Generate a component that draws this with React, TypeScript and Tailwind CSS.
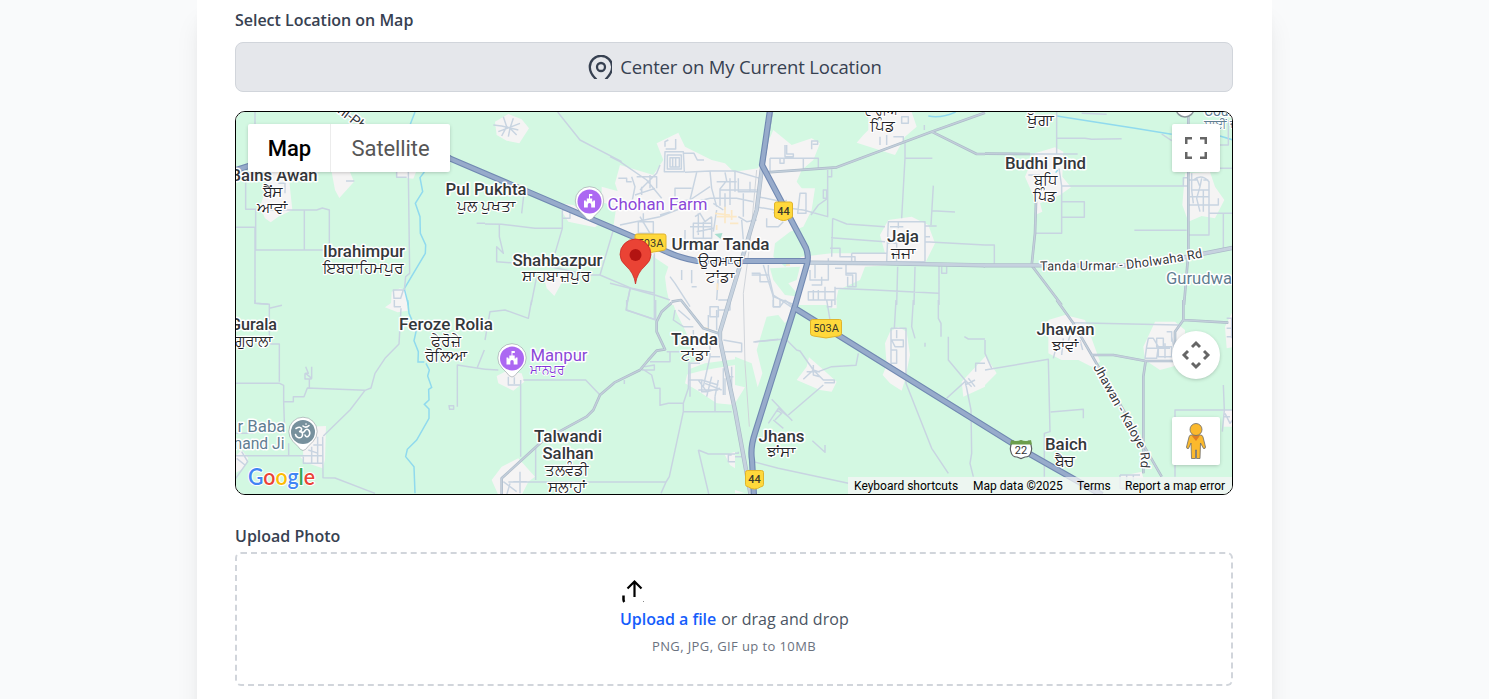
import React from 'react';

type Tile = {
  x: number;
  y: number;
  urban?: string;
  park?: string;
  minor?: string;
  sand?: string;
  secondary?: string;
  wide?: string;
  rail?: string;
  water?: string;
};

// Each tile is drawn on a 3x grid, placed at its own origin on the map canvas.
const tiles: Tile[] = [
  {
    x: 235, y: 110,
    urban: 'M90 186L160 186 172 300 130 320 107 337 90 325 75 290 95 230ZM290 186L345 186 357 215 313 264 300 240ZM485 186h58l-8 20-50-5zM470 545l25-10 18 5 5 45h-50z',
    minor: 'M60 0V120M32 186V298H62V420M3 352H62M60 350V580l40 3M62 420H283V300L262 294 245 300 62 299M208 300V420M520 186L524 490 512 500 508 540M333 213h25M485 186v16h30M725 340h25M475 540h30l-8 25h-20zM130 220h20v30',
    water: 'M540 6L525 45M568 186L555 203 563 245 541 280 555 320 556 370 572 405 571 430 508 536 520 585',
  },
  {
    x: 485, y: 110,
    urban: 'M30 35L70 12 110 28 132 55 103 100 65 92 35 75ZM515 100L580 68 600 110 680 150 720 160 750 190V585H555L545 540 540 500 550 470 505 440 450 385 385 350 400 250 390 220 405 165 505 195 535 150ZM215 280L265 285 345 340 330 352 250 335ZM175 495L230 490 240 500 208 558 185 535ZM350 230l55 15-5 50-50-20z',
    park: 'M505 440L540 480 530 520 505 500Z',
    minor: 'M25 45L50 48 100 60M55 20L65 50 50 78M85 25L75 55 95 75M40 65L105 40M65 50L75 55 70 80M218 6L285 90 410 155M118 240L110 310M0 342L50 343 150 355H232V300M43 342V380L55 430 35 410V455L95 460M232 300H255V325H232M232 355L210 430M385 360L345 495 440 535 510 550M345 495H310L150 460M155 500L138 585M508 430V550M436 535L425 585',
  },
  {
    x: 735, y: 110,
    urban: 'M0 185L70 175 75 150 115 60 170 105 230 85 255 100 235 150 200 180 185 215 200 235 240 235 230 300 205 350 165 365 120 400 115 440 150 470 200 440 290 430H450L435 375 460 330 530 320 580 345 600 400 570 460 470 465 390 470 375 510 310 540 300 585H0ZM385 75L400 60V6H530L545 50 510 80 480 135 365 98Z',
    park: 'M105 475L195 470 185 510 160 520 195 560 150 555 115 510Z',
    minor: 'M105 145V185M105 145H250V178M135 145v15h12v-15M205 145v35M150 105v35h25v-8h-20v-27M230 118v-25h18v10h-15M510 95V145h82M510 145L500 325M595 227L588 345M592 302l68 4M290 178v22h-10M278 180V320L205 300M278 265L250 285 228 315M195 250h18v60h-25zM265 240h10v25h-10zM293 325L290 440M293 325L335 342 450 350M288 383L450 395M570 395L750 405M460 335H570V455H455ZM490 335v20M505 350h-40M455 400h30v55M570 348h35M570 380h15M285 415h30v25h45v20M280 445V510H225V480M240 465v40M333 465v30h20v35h-15v-30M333 490h30v40h-25M350 430v28M350 430h105M230 525h30v-25M300 535L420 540 610 550M612 465V585M488 470L485 585M540 470L537 585M620 470v20h15v-20M220 545h80v25h-80zM235 540v30M250 540v30M270 530v40M300 530v55M300 475h22M50 490h25v25h30M85 465L115 560 180 585M68 260l75 15M60 290l60 10M165 295L205 300M95 325v25h35l15-15M115 310l40-40M435 80v25M455 75v30M475 80h30v20M500 20h20v20h-20z M568 45v15',
    secondary: 'M95 187L305 172 590 65 750 8M590 65L725 132H750',
    wide: 'M220 458L450 460 750 466',
    water: 'M580 18Q620 25 662 6',
  },
  {
    x: 985, y: 110,
    urban: 'M150 130L210 112 235 125 232 200 258 232 225 255 165 280 172 305 150 315 155 280 120 200ZM600 190L675 186 690 230 718 270 690 325 650 318 610 335 592 285Z',
    minor: 'M215 0V130M135 132h143M215 85L300 85 320 88 410 86M230 228H608M222 175L230 228V370H150M230 275h68v47h-68M448 361H605M0 405h28v60M612 375h60V260M672 310h80M715 310V415M700 105h30V30M705 175h45M620 190v50h50M625 210Q650 190 672 215V260M610 285h90v-20M635 205l10 25-10 35 10 40M650 205l-5 25M615 260h55M655 240v65M595 228v-25h15M610 210h25M130 195h35M155 210v25M150 200h50M290 10l75 3M530 72l30 20M670 210h-15M620 240L625 280',
    secondary: 'M0 131L135 132M140 466L230 585M153 275L150 370 140 466M610 20V430L597 585',
    wide: 'M-4 466H150L430 466 610 440 750 412',
    water: 'M215 18L450 55 560 73M705 78L745 90M212 188l6-8',
  },
  {
    x: 235, y: 300,
    urban: 'M450 22l28-20h35l5 30-30 5zM203 400L225 380 273 378 270 480 263 505 205 485ZM0 470l20-20 20 25-15 30-25 15zM195 470h60v20h-40z',
    minor: 'M60 0v10l43 3V105l5 27h25V245M3 250H134L146 256V305H175V290H207L217 264 390 271 408 264 420 220 450 175 492 132 498 25M212 200l8 20h-8l18 15V200M210 220v17h20M223 235v28M390 271L345 330 265 408M103 25l38-9M146 305L149 395M3 400H55M161 430V465M3 467H263M263 410L264 533 300 534 420 580M667 320V195L750 208M642 317h14v11h-12zM748 150l-22 55M0 538L38 485 20 455M5 475l25 20M205 470v20h60M230 440v50M248 410v80M220 450l30 10M235 435h30M478 0v20h20',
    water: 'M518 0L522 40 535 70 543 95 537 122 550 155 549 186H568M573 190L583 210 578 228 590 262 581 268 582 300 568 313 582 327V355L545 420 517 448 512 470 537 500 540 580',
  },
  {
    x: 485, y: 300,
    urban: 'M560 0H750V315L695 310 635 270 600 250 615 190 640 180 600 90 575 40ZM35 228L60 215 110 220 118 245 85 272 40 250ZM20 540L50 500 100 475 150 530 130 545 110 585H40ZM720 465l30-10v50l-15-10z',
    park: 'M600 212L660 190 750 178V195L690 205 650 212 600 225Z',
    minor: 'M0 120L15 35 60 30 130 55 140 0M425 0V30L512 60V0M0 208L40 210M115 240H302L345 285M107 240V470M152 440V540M70 546H543L553 530 595 335H740M595 335V310H550L525 316V265H510L500 225 470 205M470 210h38v-15l-30 5M495 185h60v-30M612 185L610 265 595 310M418 240v12M528 580L543 546M640 450L672 585M640 450L670 462H750M610 240h40l50 15M650 240v35h20M680 230L665 290M700 240L690 290M660 250l50 20M640 270h60M720 235v50M690 290v45M640 240l25 35 40-10M545 155h45M740 465h-10v20h20M70 230v25h35M88 232v20M55 545L95 575M105 515v65M75 550L65 585M85 545h40',
    secondary: 'M560 8L530 35 515 65V95L540 148 515 152 490 180 465 210 388 248 345 285 325 330 305 350 235 388 170 425 50 535V585',
  },
  {
    x: 735, y: 300,
    urban: 'M0 0H205L175 35 150 70 130 45 95 50 65 150 82 220 68 262 50 190 0 170ZM185 240L215 200 222 172 260 205 305 245 290 275 255 270ZM450 130L465 95 490 80 515 95 525 165 510 240 500 272 465 250 443 225 455 195ZM685 290L680 245 750 170V260ZM0 255L30 262 0 310zM0 570l30 10h-30zM270 0h35v25h-25z',
    minor: 'M55 126L140 118 155 120 185 150 195 153 235 210 250 215 290 200 363 196 370 160M205 238L235 210 265 240H298v8h-30M215 215h40M235 195v30l20 5M265 255L160 345M110 298L172 362M100 370l30-45 30 25M115 360l30 25M125 330l15 10-20 20M55 485L130 505 340 550M232 422l38 35v-22M483 0L478 85M468 85H513V250L590 445 640 520M468 85V210M470 150h15v40h-15M470 120h35v20h-25z M485 90v25M535 0L530 80 540 115M610 0V55l8 15v40M640 110V180L690 240 708 330 710 460 705 490 715 530M690 245L635 295M688 110L700 117H750M750 190H722V215M690 255l30-15M700 235l20 25M690 240l20 20M570 128v12M275 0L285 60M115 0v20h20l15-20M150 0l30 25M290 0v20h-15M0 460h10v-5M0 470h20',
  },
  {
    x: 985, y: 300,
    urban: 'M190 60L240 45 300 60 345 185 320 200 280 180 230 180 190 160ZM475 140L510 65 570 65 600 90V190L525 210 480 180ZM720 80L750 20V140L725 145ZM0 165L35 220 0 255ZM400 530l70-15 5 20zM715 330h35v50h-35z',
    minor: 'M265 68L580 75M0 210L190 178 195 395 178 400V530M197 336L295 328V355M570 530V330H750M715 255L718 330 712 395M0 120V160L20 205M490 115h15l15 25-5 35h-35l5-35zM515 115h20v25h-20zM520 140h40v30h-40zM545 95h15v30M485 145h70M540 130v45M560 110l10 50M725 55h25M725 85h25M740 55v60M725 110h25M235 115l-5 50M260 90l-15 50M285 120l8 30M210 155l-5 20M405 525v40h70M405 525h60M425 525v30M445 525v20M720 340l15 30 15-20M715 350h20',
    secondary: 'M215 0L265 70 320 165 385 165 482 183H580M482 183L475 230V520M595 0V60L570 95V180M595 60L730 68M320 165L530 530',
  },
  {
    x: 610, y: 110,
    minor: 'M0 140L30 155 110 210 155 265M25 205h25v10h15M65 200l10 30-10 50M90 240l50-50 10-25M75 255l60-20M95 230v25M80 200h60v35M120 195v40M165 110v-15l10-5M197 87v30h-30M165 125h55l3 60h-60zM172 135h42v42h-42zM180 143h28v28h-28zM188 143v28M197 143v28M222 130h30l10 20h20M225 187L300 183H375L450 205M260 187L240 270 200 275M245 235h-50v30M240 270L300 230M300 183L305 235 320 290M320 215h60M345 187l5 25-20 25v50M375 185v60M330 240h110M360 205v80M385 205v40h60M400 250v45M300 265h80l50 10M310 280l30 20M345 250v50M420 215v30M150 315L200 300 240 280 300 265M30 345L150 320 200 300M85 335h45v35h-45zM100 310v30M90 320l30 50M255 320l15-10 15 25 20-15M250 340h55v45h-55zM265 310v65M280 335v50M240 350h65M260 365l50-10M305 320v60M320 300l-10 65M385 320L410 335 440 330M400 275v45M225 360v30M0 520L60 535 133 555M60 535L48 600 135 628M133 435V628M135 555L180 570M180 500L195 520 240 590M215 480v30M245 480v40M245 530h15M325 500L320 570M325 570h35v30h-35M300 590h25v30h-25zM295 615v45M320 600v60M205 600L240 630M195 600L190 630 220 650H250M250 660v30M395 330L400 390 440 410M425 495h50v-30M475 490L490 555 550 595M490 555v35h20v-20M340 690l55 10v25h-50M300 690v50h30M310 705h20M270 760h-30v100M300 740L280 830M340 775v80M365 770v60M350 800h20M435 695L505 688',
    sand: 'M320 320h60M345 290v50M315 310L360 315M365 300v30M320 345v15M360 340h25M322 520v20M528 465h12M280 655h15',
    rail: 'M440 180L420 400 400 550 405 760 418 950',
    secondary: 'M185 575L213 570 280 655 325 670',
    wide: 'M484 0L455 180 440 300 410 400 330 665 330 690 375 900 422 1155',
  },
];

const layer = (key: keyof Tile, props: React.SVGProps<SVGPathElement>) =>
  tiles.map((t, i) =>
    t[key] ? (
      <path key={key + i} d={t[key] as string} transform={`translate(${t.x} ${t.y}) scale(.33333)`} {...props} />
    ) : null,
  );

// Text, centre x, baseline y and drawn width.
type Row = [string, number, number, number];

const places: Row[] = [
  ['Bains Awan', 274, 181, 87],
  ['Pul Pukhta', 486, 195, 81],
  ['Ibrahimpur', 364, 257, 82],
  ['Shahbazpur', 557.5, 265.5, 90],
  ['Urmar Tanda', 720.5, 249.5, 98],
  ['Budhi Pind', 1045.5, 169, 81],
  ['Jaja', 903, 242, 32],
  ['Gurala', 253.5, 330, 47],
  ['Feroze Rolia', 446, 330, 94],
  ['Tanda', 694.5, 345, 47],
  ['Jhawan', 1065.5, 335, 58],
  ['Talwandi', 568, 442, 68],
  ['Salhan', 568, 459, 51],
  ['Jhans', 781.5, 442, 46],
  ['Baich', 1066, 449.5, 42],
];

const gurmukhi: Row[] = [
  ['ਬੈਂਸ', 273, 197, 20],
  ['ਆਵਾਂ', 272, 213, 30],
  ['ਪੁਲ ਪੁਖਤਾ', 486, 211, 59],
  ['ਇਬਰਾਹਿਮਪੁਰ', 363, 272.5, 81],
  ['ਸ਼ਾਹਬਾਜ਼ਪੁਰ', 556, 281, 68],
  ['ਉਰਮਾਰ', 720, 266, 45],
  ['ਟਾਂਡਾ', 720, 282, 28],
  ['ਦਾਰੀਆ', 882, 115, 36],
  ['ਪਿੰਡ', 882, 131, 25],
  ['ਖੁੱਗਾ', 1040, 125, 27],
  ['ਬਧਿ', 1045, 185, 23],
  ['ਪਿੰਡ', 1045, 201, 24],
  ['ਜਜਾ', 903, 258, 25],
  ['ਗੁਰਾਲਾ', 253.5, 345.5, 38],
  ['ਫੇਰੋਜ਼ੇ', 446, 346, 30],
  ['ਰੋਲਿਆ', 446, 361, 42],
  ['ਟਾਂਡਾ', 695, 360, 28],
  ['ਝਾਵਾਂ', 1065, 351, 27],
  ['ਤਲਵੰਡੀ', 567, 475, 44],
  ['ਸਲਾਹਾਂ', 567, 492, 39],
  ['ਝਾਂਸਾ', 781, 457, 28],
  ['ਬੈਚ', 1065, 466, 20],
];

const farms: Row[] = [
  ['Chohan Farm', 657.5, 209.5, 100],
  ['Manpur', 559, 360.5, 57],
];

const temples: Row[] = [
  ['r Baba', 261.5, 431.5, 48],
  ['nand Ji', 259, 448.5, 51],
  ['Gurudwa', 1199, 283.5, 66],
];

function Labels({ rows, ...rest }: { rows: Row[] } & React.SVGProps<SVGGElement>) {
  return (
    <g textAnchor="middle" stroke="#fff" strokeWidth="3" strokeLinejoin="round" paintOrder="stroke" {...rest}>
      {rows.map(([text, x, y, width]) => (
        <text key={text + y} x={x} y={y} textLength={width} lengthAdjust="spacingAndGlyphs">{text}</text>
      ))}
    </g>
  );
}

const highway =
  'M236 170L252 165 437 151M437 151L450 158.500 636 238 665 251Q680 258 697 261L808 261M770 110L762 165 806 248Q809 256 807 264L795 306 755 433Q750 448 752 460L754 496M796 309L1028 453 1102 495';

function Shield({ x, y, w, t }: { x: number; y: number; w: number; t: string }) {
  const d = `M${x + 2} ${y}h${w - 4}q2 0 2 2v12q0 2-3 2.5L${x + w / 2 + 3} ${y + 18}q-3 1-6 0L${x + 3} ${y + 16.5}q-3-.5-3-2.5v-12q0-2 2-2z`;
  return (
    <g>
      <path d={d} fill="#ffd83b" stroke="#e0b42c" strokeWidth="1" />
      <text x={x + w / 2} y={y + 12.8} fontSize="11" fontWeight={t.length > 2 ? 400 : 500} fill="#3b3b2c" textAnchor="middle">{t}</text>
    </g>
  );
}

function Pin({ x, y, fill, children }: { x: number; y: number; fill: string; children: React.ReactNode }) {
  return (
    <g transform={`translate(${x} ${y})`}>
      <path d="M0 18.500Q-3 18-5 14.500L-10 9.500A14.200 14.200 0 1 1 10 9.500L5 14.500Q3 18 0 18.500Z" fill="#fff" stroke="#8a9299" strokeOpacity=".55" strokeWidth="1" />
      <circle r="12" fill={fill} />
      {children}
    </g>
  );
}

const Fort = () => (
  <path d="M-5.500-1h1.800v1h1V-3h2.200V-7.500H2.800v2H.5V-3h2.200v3h1v-1h1.800V6H1.700V3.200a1.700 1.700 0 0 0-3.400 0V6h-3.800z" fill="#fff" />
);

function MapCanvas() {
  return (
    <svg className="block h-full w-full" viewBox="236 112 996 382" preserveAspectRatio="none" fontFamily="Roboto, 'Noto Sans', sans-serif">
      <rect x="236" y="112" width="996" height="382" fill="#d3f8e2" />
      {layer('urban', { fill: '#f5f4f4' })}
      {layer('park', { fill: '#d3f8e2' })}
      {layer('water', { fill: 'none', stroke: '#90daee', strokeWidth: 4.5 })}
      {layer('rail', { fill: 'none', stroke: '#d0d4da', strokeWidth: 3 })}
      {layer('minor', { fill: 'none', stroke: '#c8d4e1', strokeWidth: 4.4, strokeLinejoin: 'round' })}
      {layer('sand', { fill: 'none', stroke: '#fbe8c6', strokeWidth: 5 })}
      <path d="M714.500 234l8-1-2 6z" fill="#a8dfd0" />
      {layer('secondary', { fill: 'none', stroke: '#adbbc9', strokeWidth: 8, strokeLinejoin: 'round' })}
      {layer('secondary', { fill: 'none', stroke: '#c3cfdb', strokeWidth: 4, strokeLinejoin: 'round' })}
      {layer('wide', { fill: 'none', stroke: '#abb9c8', strokeWidth: 13, strokeLinejoin: 'round' })}
      {layer('wide', { fill: 'none', stroke: '#c6d2df', strokeWidth: 9, strokeLinejoin: 'round' })}
      <path d={highway} fill="none" stroke="#7189b2" strokeWidth="6.200" strokeLinejoin="round" />
      <path d={highway} fill="none" stroke="#97abcb" strokeWidth="4" strokeLinejoin="round" />

      <circle cx="1185" cy="108" r="9" fill="#fff" stroke="#8b959b" strokeWidth="1.500" />

      <Shield x={774.5} y={202} w={18} t="44" />
      <Shield x={635} y={234} w={31} t="503A" />
      <Shield x={810.5} y={319.500} w={31} t="503A" />
      <Shield x={745.5} y={470.500} w={18} t="44" />
      <path d="M1013 441q-4 6-2 11 1 5 6 5l4 1.500 4-1.500q5 0 6-5 2-5-2-11-4 2-8 0-4 2-8 0z" fill="#fff" stroke="#5c5f63" strokeWidth="1.200" />
      <path d="M1011 440q5 2 10 0 5 2 10 0l1 4.500h-22z" fill="#6d9e4c" />
      <text x="1021" y="454" fontSize="11" textAnchor="middle" fill="#333">22</text>

      <Pin x={589.5} y={201.500} fill="#ac68f2"><Fort /></Pin>
      <Pin x={512} y={358.500} fill="#ac68f2"><Fort /></Pin>
      <Pin x={303} y={432} fill="#77909d">
        <g fill="none" stroke="#fff" strokeWidth="1.600" strokeLinecap="round">
          <path d="M-7-3.500Q-3-6-1.500-3.500-1-1-4-.5 0-.5-.5 3-1 6.500-5 5.500-7 5-7.500 2.500M-3-.5Q1 1.500 2-1.500 4-4 6-1.500 8 2 5 4.500 3 5.500 2 3M0-6q3 2.500 6-.5" />
          <path d="M3-8v.1" />
        </g>
      </Pin>

      <Labels rows={gurmukhi} fontSize="14.800" fill="#1f2226" strokeWidth="2.600" />
      <Labels rows={places} fontSize="16.500" fontWeight="500" fill="#34373b" />
      <Labels rows={farms} fontSize="16.500" fill="#8b48d8" />
      <Labels rows={temples} fontSize="16.500" fill="#5f7d91" />
      <Labels rows={[['ਮਾਨਪੁਰ', 547, 374, 34]]} fontSize="12.500" fill="#7f35d6" strokeWidth="2" />
      <Labels rows={[['Court', 1221, 116, 34]]} fontSize="14" fill="#5f7d91" />
      <Labels rows={[['ਸਾਈਂ ਜ', 1221, 128, 34]]} fontSize="12" fill="#5f7d91" strokeWidth="2" />

      <defs>
        <path id="dholwaha" d="M1040 270.500L1115 270Q1160 266 1210 256" />
        <path id="kaloye" d="M1093 367L1138 448Q1143 456 1139 475" />
      </defs>
      <g fontSize="12.800" fill="#34373b" stroke="#fff" strokeWidth="3" strokeLinejoin="round" paintOrder="stroke">
        <text textLength="164" lengthAdjust="spacing"><textPath href="#dholwaha">Tanda Urmar - Dholwaha Rd</textPath></text>
        <text textLength="113"><textPath href="#kaloye">Jhawan - Kaloye Rd</textPath></text>
        <text transform="translate(337 112) rotate(38)" fontSize="14">hi-Pb</text>
      </g>

      <path d="M635.500 284Q634 273 626 266 620 261 620 254.500A15.500 15.500 0 0 1 651 254.500Q651 261 645 266 637 273 635.500 284Z" fill="#ea4335" stroke="#c5221f" strokeWidth=".7" />
      <circle cx="635.500" cy="255" r="6" fill="#b31412" />

      <text x="248" y="485" fontSize="22" fontWeight="600" textLength="67" lengthAdjust="spacingAndGlyphs" stroke="#fff" strokeWidth="2" paintOrder="stroke" fontFamily="Lato, sans-serif">
        <tspan fill="#4285f4">G</tspan><tspan fill="#ea4335">o</tspan><tspan fill="#fbbc04">o</tspan><tspan fill="#4285f4">g</tspan><tspan fill="#34a853">l</tspan><tspan fill="#ea4335">e</tspan>
      </text>
    </svg>
  );
}

export default function App() {
  return (
    <div className="h-[699px] overflow-hidden bg-[#f9fafb] font-['Open_Sans',sans-serif] text-[#374151]">
      <main className="ml-[197px] flex h-[760px] w-[1075px] flex-col bg-white px-[38px] pt-[9px] shadow-xl">
        <div className="flex h-[22px] items-center">
          <span className="text-[16px] font-semibold tracking-[-0.020px] whitespace-nowrap">Select Location on Map</span>
        </div>

        <button className="mt-[11px] flex h-[50px] w-[998px] shrink-0 items-center justify-center rounded-lg border border-[#d1d5db] bg-[#e5e7eb] pl-[2px]">
          <svg className="mr-2 h-6 w-6" viewBox="0 0 24 24" fill="none" stroke="#374151" strokeWidth="2.300">
            <path d="M8.500 24.500C4.500 21 1.800 17 1.800 12a11.200 11.200 0 0 1 22.400 0C24.200 17 21 21 17.500 24.500" />
            <circle cx="13" cy="12" r="4" />
          </svg>
          <span className="text-[18.500px] tracking-[-0.140px] whitespace-nowrap">Center on My Current Location</span>
        </button>

        <section className="relative mt-[19px] h-[384px] w-[998px] shrink-0 overflow-hidden rounded-[10px] border border-black font-[Roboto,sans-serif]">
          <MapCanvas />

          <div className="absolute top-3 left-3 flex h-12 rounded-[2px] bg-white text-[22px] shadow-[0_1px_4px_-1px_rgba(0,0,0,0.3)]">
            <button className="w-[83px] border-r border-[#ececec] pl-px font-medium text-black">Map</button>
            <button className="w-[119px] tracking-[-0.100px] text-[#565656]">Satellite</button>
          </div>

          <button className="absolute top-3 right-3 flex size-12 items-center justify-center rounded-[2px] bg-white shadow-[0_1px_4px_-1px_rgba(0,0,0,0.3)]">
            <svg className="size-[22px]" viewBox="0 0 22 22" fill="none" stroke="#666" strokeWidth="2.500">
              <path d="M1.250 7V1.250H7M15 1.250h5.750V7M20.750 15v5.750H15M7 20.750H1.250V15" />
            </svg>
          </button>

          <button className="absolute top-[219px] right-3 flex size-12 items-center justify-center rounded-full bg-white shadow-[0_1px_4px_-1px_rgba(0,0,0,0.3)]">
            <svg className="size-[30px]" viewBox="0 0 30 30" fill="none" stroke="#666" strokeWidth="2.900">
              <path d="M11 7l4-4 4 4M11 23l4 4 4-4M7 11l-4 4 4 4M23 11l4 4-4 4" />
            </svg>
          </button>

          <button className="absolute top-[305px] right-3 flex size-12 items-center justify-center rounded-[2px] bg-white shadow-[0_1px_4px_-1px_rgba(0,0,0,0.3)]">
            <svg className="h-9 w-[22px]" viewBox="0 0 22 36" stroke="#6b6b6b" strokeWidth=".8">
              <path d="M6 12h9.500q2 0 2.500 2l2.500 10q0 2-2 1.500L15.500 20 15 35.500h-3.500V27h-1v8.500H6.500L6 20l-2.500 5.500q-2 .5-2-1.500L4 14q.5-2 2-2z" fill="#fbb92d" />
              <path d="M6.500 12.500h8.500L11 18z" fill="#df7d25" stroke="none" />
              <circle cx="11" cy="6.500" r="6" fill="#fbb92d" />
            </svg>
          </button>

          <div className="absolute right-0 bottom-0 flex h-[17px] items-center bg-[#f5f5f5]/75 pr-[7px] pl-[6px] text-[12px] whitespace-nowrap text-black">
            <span className="w-[119px]">Keyboard shortcuts</span>
            <span className="w-[104px]">Map data ©2025</span>
            <span className="w-[48px]">Terms</span>
            <span className="w-[100px]">Report a map error</span>
          </div>
        </section>

        <div className="mt-[30px] flex h-[22px] shrink-0 items-center">
          <span className="text-[16px] font-semibold whitespace-nowrap">Upload Photo</span>
        </div>

        <div className="mt-[5px] flex h-[134px] w-[998px] shrink-0 flex-col items-center rounded-md border-2 border-dashed border-[#d1d5db] pt-[25px]">
          <div className="flex w-[228px] flex-col">
            <svg className="h-6 w-6" viewBox="0 0 24 24" fill="none" stroke="#000" strokeWidth="2.200">
              <path d="M14.500 18V3M7.500 9.500l7-7 7 7" />
              <path d="M3.500 16.500v4q0 1.500.8 2.500" strokeWidth="2.500" />
              <path d="M23 22.500h1" strokeWidth="1" stroke="#888" />
            </svg>
            <div className="mt-[4px] flex h-6 items-center text-[16px] whitespace-nowrap text-[#4b5563]">
              <span className="font-semibold tracking-[-0.050px] text-[#155dfc]">Upload a file</span>
              <span className="ml-[5px] tracking-[0.050px]">or drag and drop</span>
            </div>
          </div>
          <p className="mt-[5px] text-[13px] leading-5 tracking-[0.400px] whitespace-nowrap text-[#6b7280]">PNG, JPG, GIF up to 10MB</p>
        </div>
      </main>
    </div>
  );
}
